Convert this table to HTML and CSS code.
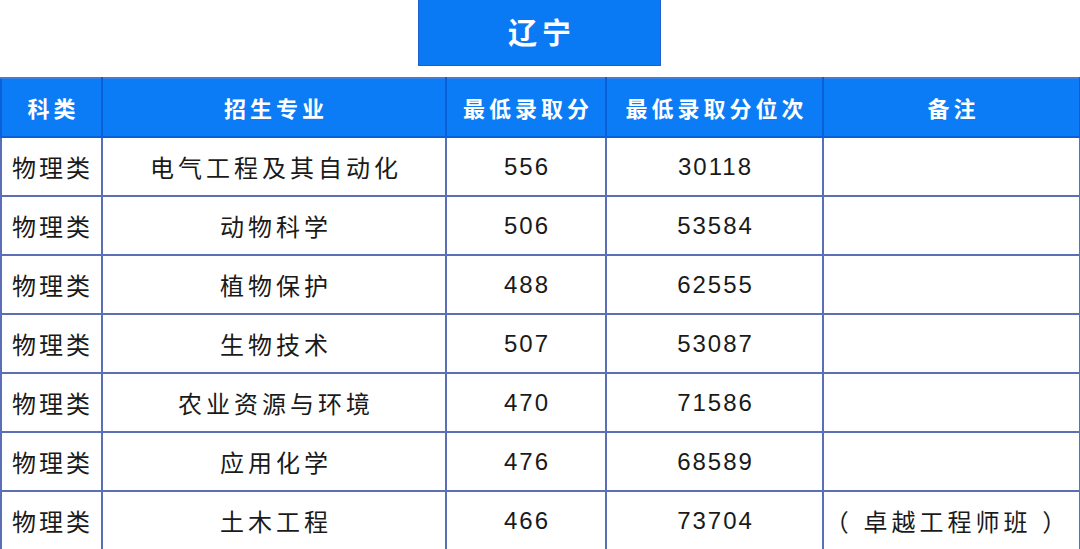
FILE: index.html
```html
<!DOCTYPE html>
<html lang="zh">
<head>
<meta charset="utf-8">
<link rel="stylesheet" href="styles.css">
</head>
<body>
<div class="page">
  <div class="title-wrap"><div class="title">辽宁</div></div>
  <table class="scores">
    <colgroup>
      <col class="c1"><col class="c2"><col class="c3"><col class="c4"><col class="c5">
    </colgroup>
    <thead>
      <tr><th>科类</th><th>招生专业</th><th>最低录取分</th><th>最低录取分位次</th><th>备注</th></tr>
    </thead>
    <tbody>
      <tr><td>物理类</td><td>电气工程及其自动化</td><td class="num">556</td><td class="num">30118</td><td></td></tr>
      <tr><td>物理类</td><td>动物科学</td><td class="num">506</td><td class="num">53584</td><td></td></tr>
      <tr><td>物理类</td><td>植物保护</td><td class="num">488</td><td class="num">62555</td><td></td></tr>
      <tr><td>物理类</td><td>生物技术</td><td class="num">507</td><td class="num">53087</td><td></td></tr>
      <tr><td>物理类</td><td>农业资源与环境</td><td class="num">470</td><td class="num">71586</td><td></td></tr>
      <tr><td>物理类</td><td>应用化学</td><td class="num">476</td><td class="num">68589</td><td></td></tr>
      <tr><td>物理类</td><td>土木工程</td><td class="num">466</td><td class="num">73704</td><td class="note">（ 卓越工程师班 ）</td></tr>
    </tbody>
  </table>
</div>
</body>
</html>
```
FILE: styles.css
```css
html, body {
  margin: 0;
  padding: 0;
  background: #ffffff;
}
.page {
  width: 1080px;
  height: 549px;
  overflow: hidden;
  font-family: "Liberation Sans", "Noto Sans CJK SC", sans-serif;
  color: #1a1a1a;
  text-spacing-trim: space-all;
}
.title-wrap {
  display: flex;
  justify-content: center;
  height: 66px;
  margin-bottom: 11px;
}
.title {
  box-sizing: border-box;
  width: 243px;
  height: 67px;
  margin-top: -1px;
  margin-left: -1px;
  background: #0a7af4;
  border: 1px solid #1f5fcf;
  color: #ffffff;
  font-weight: bold;
  font-size: 29px;
  letter-spacing: 5px;
  display: flex;
  align-items: center;
  justify-content: center;
  padding: 0 0 4px 5px;
}
.scores {
  border-collapse: collapse;
  table-layout: fixed;
  width: 1079px;
  margin-left: 0;
}
.c1 { width: 101px; }
.c2 { width: 344px; }
.c3 { width: 160px; }
.c4 { width: 217px; }
.c5 { width: 257px; }
.scores th {
  background: #0b7cf6;
  color: #ffffff;
  font-weight: bold;
  font-size: 22px;
  letter-spacing: 4px;
  height: 55px;
  padding: 0 0 2px 4px;
  border: 2px solid #0c5fdc;
  border-top-color: #3a7ee0;
  text-align: center;
}
.scores td {
  height: 57px;
  padding: 0 0 0 4px;
  font-size: 24px;
  letter-spacing: 4px;
  text-align: center;
  border: 2px solid #5b6fb6;
}
.scores td:first-child {
  letter-spacing: 3px;
  padding-left: 2px;
}
.scores td.num {
  letter-spacing: 2px;
  padding-left: 2px;
}
.scores td.note {
  letter-spacing: 4px;
  padding: 0 8px 0 0;
  white-space: pre;
}
```
